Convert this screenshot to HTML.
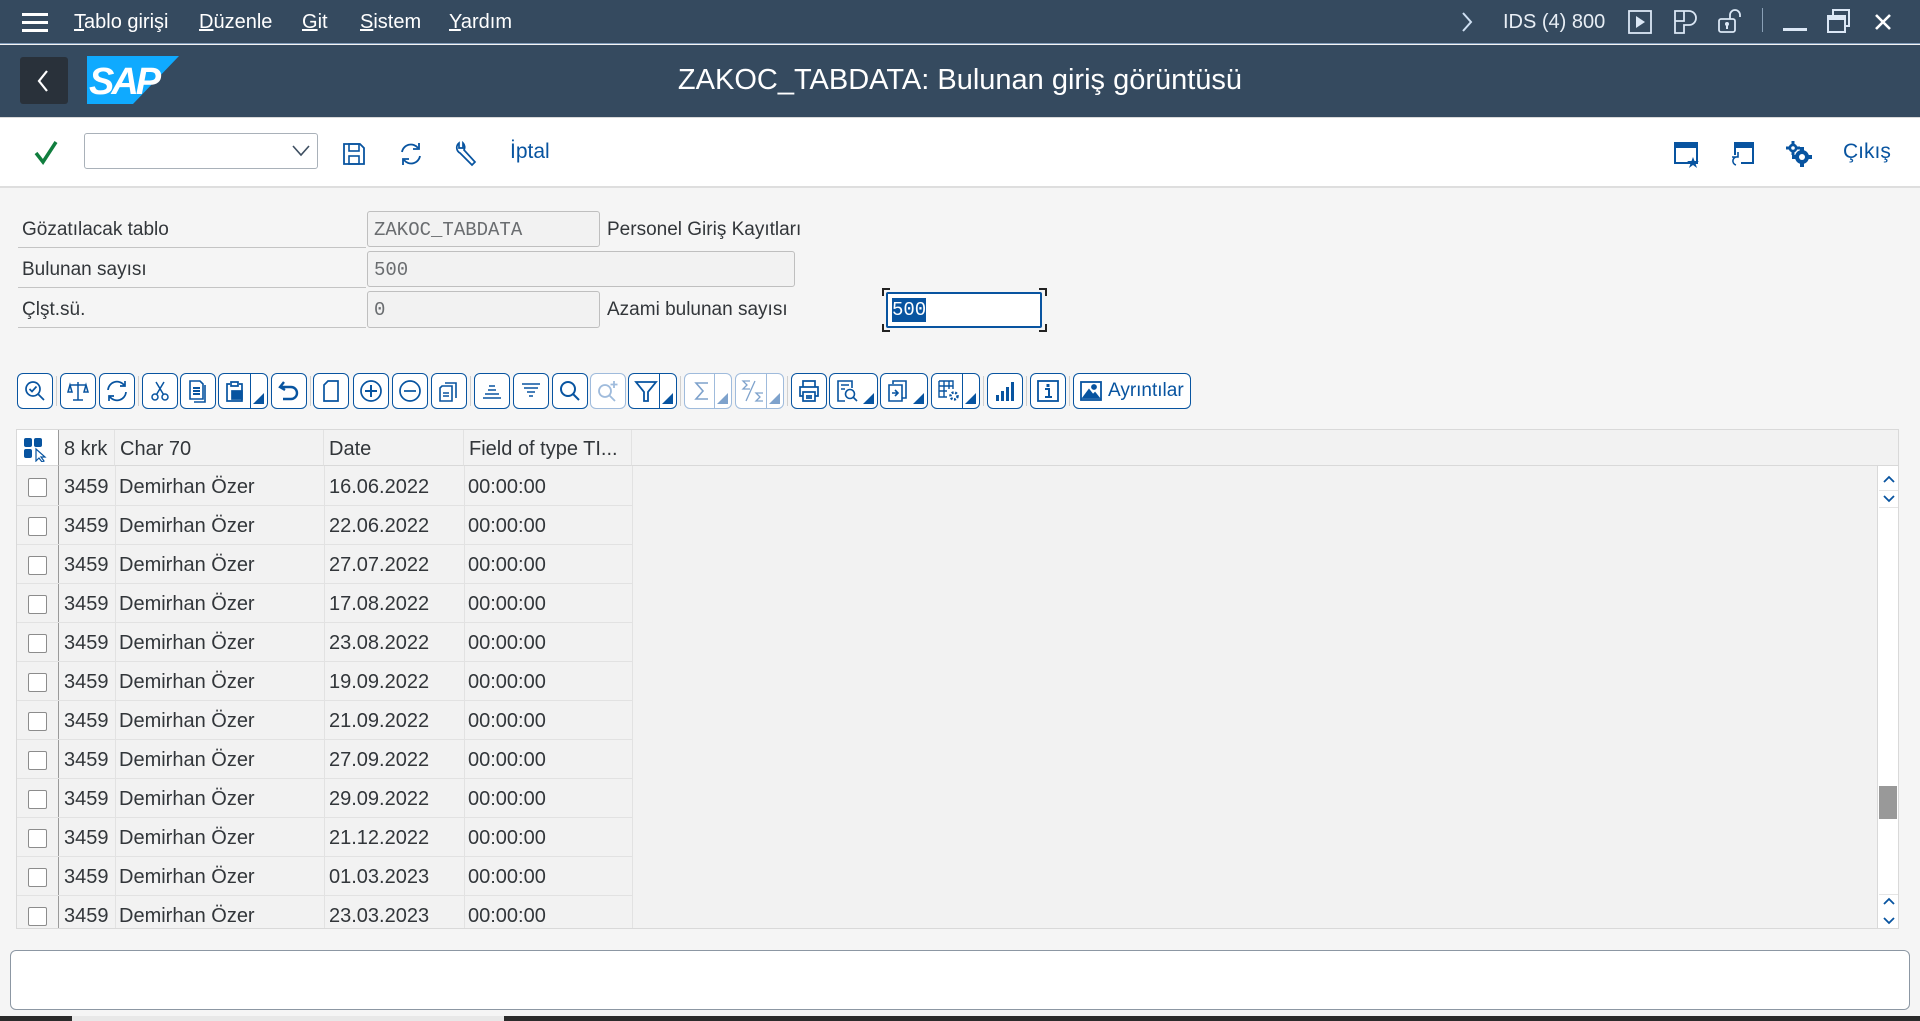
<!DOCTYPE html>
<html><head><meta charset="utf-8">
<style>
*{box-sizing:border-box;margin:0;padding:0}
body{width:1920px;height:1021px;overflow:hidden;background:#f5f5f5;font-family:"Liberation Sans","DejaVu Sans",sans-serif;position:relative;color:#32363a}
.a{position:absolute}
#menu{left:0;top:0;width:1920px;height:44px;background:#354a5f;border-bottom:1px solid #7f9ab8}
#menu .m{position:absolute;top:11px;color:#fff;font-size:20px}
#menu .m u{text-decoration:underline}
#title{left:0;top:45px;width:1920px;height:72px;background:#354a5f}
#tb{left:0;top:117px;width:1920px;height:71px;background:#fff;border-top:1px solid #d9d9d9;border-bottom:2px solid #dedede}
.lbl{font-size:19px;color:#32363a}
.row{position:absolute;left:18px;width:348px;border-bottom:1px solid #c4c4c4;height:40px}
.fld{position:absolute;background:#f2f2f2;border:1px solid #bfbfbf;border-radius:3px;font-family:"Liberation Mono",monospace;font-size:19px;color:#6a6d70;padding:7px 6px}
.b{position:absolute;top:373px;height:36px;width:36px;background:#fff;border:1.5px solid #0854a0;border-radius:6px}
.b.d{border-color:#9fbbdc}
.b svg{position:absolute;left:5px;top:5px}
.b .sp{position:absolute;top:0;bottom:0;border-left:1.5px solid #0854a0}
.b.d .sp{border-color:#9fbbdc}
.b .tri{position:absolute;right:3px;bottom:4px;width:0;height:0;border-left:11px solid transparent;border-bottom:11px solid #0854a0}
.b.d .tri{border-bottom-color:#7ea2cc}
.sep{position:absolute;top:376px;width:1px;height:30px;background:#d0d0d0}
#grid{left:16px;top:429px;width:1883px;height:500px;background:#f2f2f2;border:1px solid #d9d9d9;overflow:hidden}
.hd{position:absolute;top:0;height:36px;border-bottom:1px solid #d9d9d9;border-right:1px solid #e2e2e2;font-size:20px;padding:8px 5px;color:#32363a;white-space:nowrap}
.tr{position:absolute;left:0;width:615px;height:39px;border-bottom:1px solid #e2e2e2}
.tr span{position:absolute;top:9px;font-size:20px;color:#32363a;white-space:nowrap}
.cb{position:absolute;left:11px;top:11px;width:19px;height:19px;background:#fff;border:1px solid #8c8c8c;border-radius:2px}
.cn{position:absolute;width:8px;height:8px;border-color:#222;border-style:solid;border-width:0}
</style></head><body>

<div id="menu" class="a">
 <svg class="a" style="left:22px;top:12px" width="26" height="20"><rect y="1" width="26" height="3" fill="#fff"/><rect y="9" width="26" height="3" fill="#fff"/><rect y="17" width="26" height="3" fill="#fff"/></svg>
 <div class="m" style="left:74px"><u>T</u>ablo girişi</div>
 <div class="m" style="left:199px"><u>D</u>üzenle</div>
 <div class="m" style="left:302px"><u>G</u>it</div>
 <div class="m" style="left:360px"><u>S</u>istem</div>
 <div class="m" style="left:449px"><u>Y</u>ardım</div>
 <svg class="a" style="left:1460px;top:11px" width="14" height="22"><path d="M3 2 L11 11 L3 20" stroke="#cfe0f3" stroke-width="2" fill="none"/></svg>
 <div class="m" style="left:1503px;color:#e8eef5">IDS (4) 800</div>
 <svg class="a" style="left:1628px;top:10px" width="24" height="24"><rect x="1" y="1" width="22" height="22" fill="none" stroke="#dbe7f5" stroke-width="1.8"/><path d="M8 6 L17 12 L8 18Z" fill="#dbe7f5"/></svg>
 <svg class="a" style="left:1673px;top:9px" width="26" height="26"><path d="M2 2 H16 A7 7 0 0 1 16 16 H11 V24 H2Z M2 12 H11 V2" stroke="#dbe7f5" stroke-width="1.8" fill="none"/></svg>
 <svg class="a" style="left:1717px;top:8px" width="26" height="26"><rect x="2" y="11" width="16" height="13" rx="2" fill="none" stroke="#dbe7f5" stroke-width="1.8"/><path d="M13 11 V7 A5 5 0 0 1 23 7 V9" stroke="#dbe7f5" stroke-width="1.8" fill="none"/><circle cx="10" cy="16" r="2" fill="#dbe7f5"/><rect x="9" y="16" width="2" height="5" fill="#dbe7f5"/></svg>
 <div class="a" style="left:1762px;top:8px;width:1px;height:24px;background:#8aa0b6"></div>
 <div class="a" style="left:1783px;top:28px;width:24px;height:3px;background:#dbe7f5"></div>
 <svg class="a" style="left:1827px;top:8px" width="24" height="26"><rect x="1" y="8" width="17" height="16" fill="none" stroke="#dbe7f5" stroke-width="2"/><rect x="1" y="8" width="17" height="4" fill="#dbe7f5"/><path d="M6 7 V2 H22 V18 H19" stroke="#dbe7f5" stroke-width="2" fill="none"/></svg>
 <svg class="a" style="left:1874px;top:13px" width="18" height="18"><path d="M2 2 L16 16 M16 2 L2 16" stroke="#fff" stroke-width="2.6"/></svg>
</div>

<div id="title" class="a">
 <div class="a" style="left:20px;top:12px;width:48px;height:47px;background:#29313a;border-radius:3px"></div>
 <svg class="a" style="left:34px;top:23px" width="18" height="26"><path d="M13 3 L5 13 L13 23" stroke="#fff" stroke-width="2.2" fill="none"/></svg>
 <svg class="a" style="left:87px;top:11px" width="92" height="48"><path d="M0 0 H92 L46 48 H0Z" fill="#0faaff"/><text x="2" y="38" font-family="Liberation Sans Narrow, Liberation Sans" font-weight="bold" font-style="italic" font-size="38" fill="#fff" letter-spacing="-3">SAP</text></svg>
 <div class="a" style="left:0;width:1920px;text-align:center;top:19px;color:#fff;font-size:29px">ZAKOC_TABDATA: Bulunan giriş görüntüsü</div>
</div>

<div id="tb" class="a">
 <svg class="a" style="left:34px;top:22px" width="24" height="26"><path d="M2 13 L9 22 L22 2" stroke="#107e3e" stroke-width="3.5" fill="none"/></svg>
 <div class="a" style="left:84px;top:15px;width:234px;height:36px;background:#fff;border:1px solid #a9b1b9;border-radius:3px"></div>
 <svg class="a" style="left:292px;top:27px" width="18" height="12"><path d="M1 1 L9 10 L17 1" stroke="#3e4f61" stroke-width="1.6" fill="none"/></svg>
 <svg class="a" style="left:342px;top:24px" width="24" height="24"><path d="M2 2 H18 L22 6 V22 H2Z" fill="none" stroke="#0854a0" stroke-width="1.8"/><rect x="7" y="2" width="10" height="7" fill="none" stroke="#0854a0" stroke-width="1.6"/><rect x="7" y="14" width="10" height="8" fill="none" stroke="#0854a0" stroke-width="1.6"/></svg>
 <svg class="a" style="left:398px;top:23px" width="26" height="26"><path d="M4 11 A9 9 0 0 1 20 7 M22 15 A9 9 0 0 1 6 19" stroke="#0854a0" stroke-width="1.8" fill="none"/><path d="M21 2 V8 H15 M5 24 V18 H11" stroke="#0854a0" stroke-width="1.8" fill="none"/></svg>
 <svg class="a" style="left:454px;top:23px" width="24" height="26"><path d="M5 2 A6 6 0 0 0 6 12 L18 24 L21 21 L10 9 A6 6 0 0 0 9 2 L9 7 L5 7Z" stroke="#0854a0" stroke-width="1.7" fill="none"/></svg>
 <div class="a" style="left:510px;top:22px;font-size:21px;color:#0854a0">İptal</div>
 <svg class="a" style="left:1674px;top:24px" width="26" height="26"><rect x="1" y="1" width="22" height="20" fill="none" stroke="#0854a0" stroke-width="2"/><rect x="1" y="1" width="22" height="5" fill="#0854a0"/><path d="M19 15 L20.5 19 L25 19 L21.5 21.5 L23 26 L19 23 L15 26 L16.5 21.5 L13 19 L17.5 19Z" fill="#0854a0"/></svg>
 <svg class="a" style="left:1730px;top:24px" width="26" height="26"><path d="M5 13 V1 H23 V21 H11" fill="none" stroke="#0854a0" stroke-width="2"/><rect x="5" y="1" width="18" height="5" fill="#0854a0"/><path d="M8 15 A4 4 0 1 0 6 23 M2 15 H8 V10" stroke="#0854a0" stroke-width="1.6" fill="none"/></svg>
 <svg class="a" style="left:1786px;top:23px" width="26" height="26"><g fill="#0854a0"><circle cx="7" cy="7" r="4.5"/><rect x="5.5" y="0" width="3" height="14"/><rect x="0" y="5.5" width="14" height="3"/><circle cx="16" cy="16" r="7"/><rect x="14" y="6" width="4" height="20"/><rect x="6" y="14" width="20" height="4"/></g><circle cx="7" cy="7" r="1.8" fill="#fff"/><circle cx="16" cy="16" r="3" fill="#fff"/></svg>
 <div class="a" style="left:1843px;top:22px;font-size:21px;color:#0854a0">Çıkış</div>
</div>

<!-- form -->
<div class="row" style="top:208px"><div class="lbl a" style="left:4px;top:11px">Gözatılacak tablo</div></div>
<div class="row" style="top:248px"><div class="lbl a" style="left:4px;top:11px">Bulunan sayısı</div></div>
<div class="row" style="top:288px"><div class="lbl a" style="left:4px;top:11px">Çlşt.sü.</div></div>
<div class="fld" style="left:367px;top:211px;width:233px;height:36px">ZAKOC_TABDATA</div>
<div class="fld" style="left:367px;top:251px;width:428px;height:36px">500</div>
<div class="fld" style="left:367px;top:291px;width:233px;height:37px">0</div>
<div class="lbl a" style="left:607px;top:219px">Personel Giriş Kayıtları</div>
<div class="lbl a" style="left:607px;top:299px">Azami bulunan sayısı</div>
<div class="cn" style="left:882px;top:288px;border-left-width:2px;border-top-width:2px"></div>
<div class="cn" style="left:1039px;top:288px;border-right-width:2px;border-top-width:2px"></div>
<div class="cn" style="left:882px;top:324px;border-left-width:2px;border-bottom-width:2px"></div>
<div class="cn" style="left:1039px;top:324px;border-right-width:2px;border-bottom-width:2px"></div>
<div class="a" style="left:886px;top:292px;width:156px;height:36px;background:#fff;border:2px solid #0854a0;border-radius:2px"></div>
<div class="a" style="left:892px;top:298px;background:#0854a0;color:#fff;font-family:'Liberation Mono',monospace;font-size:19px;padding:1px 0">500</div>

<!-- ALV toolbar -->
<div class="b" style="left:17px"><svg width="24" height="24" fill="none" stroke="#0854a0" stroke-width="1.7"><circle cx="10" cy="10" r="7"/><path d="M15 15 L21 21 M6.5 10 L9 12.5 L13.5 7.5"/></svg></div>
<div class="sep" style="left:56px"></div>
<div class="b" style="left:60px"><svg width="24" height="24" fill="none" stroke="#0854a0" stroke-width="1.5"><path d="M12 3 V21 M7 21 H17 M4 6 H20 M2 13 L4 6 L6 13Z M18 13 L20 6 L22 13Z"/></svg></div>
<div class="b" style="left:99px"><svg width="24" height="24" fill="none" stroke="#0854a0" stroke-width="1.7"><path d="M3 11 A9 9 0 0 1 19 6 M21 13 A9 9 0 0 1 5 18 M20 2 V7 H15 M4 22 V17 H9"/></svg></div>
<div class="sep" style="left:138px"></div>
<div class="b" style="left:142px"><svg width="24" height="24" fill="none" stroke="#0854a0" stroke-width="1.5"><circle cx="7" cy="18" r="3"/><circle cx="17" cy="18" r="3"/><path d="M8.5 15.5 L16 3 M15.5 15.5 L8 3"/></svg></div>
<div class="b" style="left:180px"><svg width="24" height="24" fill="none" stroke="#0854a0" stroke-width="1.6"><path d="M4 2 H14 L17 5 V20 H4Z M19 6 V23 H8"/><path d="M7 9 H14 M7 12 H14 M7 15 H14" stroke-width="2"/></svg></div>
<div class="b" style="left:218px;width:50px"><svg width="24" height="24" fill="none" stroke="#0854a0" stroke-width="1.7"><path d="M6 5 H3 V22 H18 V5 H15 M7 3 H14 V7 H7Z"/><rect x="8" y="12" width="10" height="8" fill="#0854a0"/></svg><div class="sp" style="left:31px"></div><div class="tri"></div></div>
<div class="b" style="left:271px"><svg width="24" height="24" fill="none" stroke="#0854a0" stroke-width="2.4"><path d="M7 3 L3 8 L8 11 M4 8 H14 A6 6 0 0 1 14 20 H6"/></svg></div>
<div class="sep" style="left:310px"></div>
<div class="b" style="left:313px"><svg width="24" height="24" fill="none" stroke="#0854a0" stroke-width="1.7"><path d="M9 2 H19 V22 H5 V6Z"/></svg></div>
<div class="b" style="left:353px"><svg width="24" height="24" fill="none" stroke="#0854a0" stroke-width="1.7"><circle cx="12" cy="12" r="10"/><path d="M12 6 V18 M6 12 H18" stroke-width="2"/></svg></div>
<div class="b" style="left:392px"><svg width="24" height="24" fill="none" stroke="#0854a0" stroke-width="1.7"><circle cx="12" cy="12" r="10"/><path d="M6 12 H18"/></svg></div>
<div class="b" style="left:431px"><svg width="24" height="24" fill="none" stroke="#0854a0" stroke-width="1.6"><path d="M5 7 H15 V22 H3 V9Z M8 4 H19 V19"/><path d="M6 14 H12 M6 17 H12"/></svg></div>
<div class="sep" style="left:470px"></div>
<div class="b" style="left:474px"><svg width="24" height="24" stroke="#0854a0" stroke-width="1.4"><path d="M9 7 H15 M8 11 H16 M5 15 H19 M3 19 H21"/></svg></div>
<div class="b" style="left:513px"><svg width="24" height="24" stroke="#0854a0" stroke-width="1.4"><path d="M3 5 H21 M5 9 H19 M8 13 H16 M10 17 H14"/></svg></div>
<div class="b" style="left:552px"><svg width="24" height="24" fill="none" stroke="#0854a0" stroke-width="2"><circle cx="10" cy="10" r="7"/><path d="M15 15 L21 21"/></svg></div>
<div class="b d" style="left:590px"><svg width="24" height="24" fill="none" stroke="#9fbbdc" stroke-width="1.8"><circle cx="9" cy="12" r="6"/><path d="M13 16 L19 22 M18 2 V9 M14.5 5.5 H21.5"/></svg></div>
<div class="b" style="left:628px;width:49px"><svg width="24" height="24" fill="none" stroke="#0854a0" stroke-width="1.8"><path d="M2 3 H22 L14 13 V22 H10 V13Z"/></svg><div class="sp" style="left:30px"></div><div class="tri"></div></div>
<div class="sep" style="left:680px"></div>
<div class="b d" style="left:684px;width:48px"><svg width="24" height="24" fill="none" stroke="#7ea2cc" stroke-width="1.6"><path d="M18 4 H6 L13 12 L6 20 H18"/></svg><div class="sp" style="left:29px"></div><div class="tri"></div></div>
<div class="b d" style="left:735px;width:49px"><svg width="24" height="24" fill="none" stroke="#7ea2cc" stroke-width="1.3"><path d="M9 2 H2 L6 6 L2 10 H9 M5 22 L14 2 M22 14 H15 L19 18 L15 22 H22"/></svg><div class="sp" style="left:30px"></div><div class="tri"></div></div>
<div class="sep" style="left:787px"></div>
<div class="b" style="left:791px"><svg width="24" height="24" fill="none" stroke="#0854a0" stroke-width="1.7"><path d="M6 8 V2 H18 V8 M6 17 H3 V8 H21 V17 H18 M6 13 H18 V22 H6Z M9 17 H15 M9 19 H15"/></svg></div>
<div class="b" style="left:829px;width:49px"><svg width="24" height="24" fill="none" stroke="#0854a0" stroke-width="1.6"><path d="M10 22 H3 V2 H17 V9 M6 6 H14 M6 10 H10"/><circle cx="15" cy="15" r="4.5"/><path d="M18 18 L22 22"/></svg><div class="tri"></div></div>
<div class="b" style="left:880px;width:48px"><svg width="24" height="24" fill="none" stroke="#0854a0" stroke-width="1.6"><path d="M7 5 V2 H20 V19 H16 M3 6 H16 V22 H3Z M6 14 H12 M9 11 L12 14 L9 17"/></svg><div class="tri"></div></div>
<div class="b" style="left:931px;width:49px"><svg width="24" height="24" fill="none" stroke="#0854a0" stroke-width="1.4"><path d="M2 2 H16 V10 M2 2 V18 H10 M2 7 H16 M2 12 H10 M7 2 V18 M12 2 V10"/><circle cx="17" cy="17" r="3.5" stroke-width="2.5" stroke-dasharray="2 1.5"/></svg><div class="sp" style="left:30px"></div><div class="tri"></div></div>
<div class="sep" style="left:983px"></div>
<div class="b" style="left:987px"><svg width="24" height="24" fill="#0854a0"><rect x="3" y="16" width="3" height="6"/><rect x="8" y="12" width="3" height="10"/><rect x="13" y="8" width="3" height="14"/><rect x="18" y="3" width="3" height="19"/></svg></div>
<div class="sep" style="left:1026px"></div>
<div class="b" style="left:1030px"><svg width="24" height="24" fill="none" stroke="#0854a0" stroke-width="1.8"><rect x="2" y="2" width="20" height="20"/><rect x="10.5" y="5" width="3" height="3" fill="#0854a0" stroke="none"/><path d="M9 10 H13 V18 M9 18 H16" stroke-width="2"/></svg></div>
<div class="sep" style="left:1069px"></div>
<div class="b" style="left:1073px;width:118px"><svg width="24" height="24" fill="none" stroke="#0854a0" stroke-width="1.8"><rect x="2" y="3" width="20" height="18"/><path d="M4 19 L10 11 L14 16 L16 14 L20 19Z" fill="#0854a0"/><circle cx="15" cy="8" r="2" fill="#0854a0"/></svg><div class="a" style="left:34px;top:6px;font-size:19px;color:#0854a0">Ayrıntılar</div></div>

<!-- grid -->
<div id="grid" class="a">
 <div class="hd" style="left:0;width:42px;background:#fff;border-right:1px solid #9a9a9a;border-bottom:1px solid #d9d9d9"><svg class="a" style="left:7px;top:8px" width="26" height="24"><rect x="0" y="0" width="8" height="9" rx="2" fill="#0854a0"/><rect x="10" y="0" width="8" height="9" rx="2" fill="#0854a0"/><rect x="0" y="11" width="8" height="9" rx="2" fill="#0854a0"/><path d="M12 11 L12 23 L15 20 L18 24 L20 23 L17 19 L21 19Z" fill="#fff" stroke="#0854a0" stroke-width="1.2"/></svg></div>
 <div class="hd" style="left:42px;width:56px">8 krk</div>
 <div class="hd" style="left:98px;width:209px">Char 70</div>
 <div class="hd" style="left:307px;width:140px">Date</div>
 <div class="hd" style="left:447px;width:168px">Field of type TI...</div>
 <div class="a" style="left:615px;top:0;width:1266px;height:36px;border-bottom:1px solid #d9d9d9"></div>
 <div class="a" style="left:41px;top:36px;width:1px;height:464px;background:#9a9a9a"></div>
 <div class="a" style="left:98px;top:36px;width:1px;height:464px;background:#e2e2e2"></div>
 <div class="a" style="left:307px;top:36px;width:1px;height:464px;background:#e2e2e2"></div>
 <div class="a" style="left:447px;top:36px;width:1px;height:464px;background:#e2e2e2"></div>
 <div class="a" style="left:615px;top:36px;width:1px;height:464px;background:#e2e2e2"></div>
 <div id="rows"></div>
 <div class="a" style="left:1860px;top:36px;width:22px;height:463px;background:#fff;border-left:1px solid #d9d9d9"></div>
 <svg class="a" style="left:1865px;top:43px" width="14" height="34"><path d="M2 9 L7 4 L12 9 M2 23 L7 28 L12 23" stroke="#0854a0" stroke-width="1.8" fill="none"/></svg>
 <div class="a" style="left:1862px;top:60px;width:19px;height:1px;background:#e5e5e5"></div>
 <div class="a" style="left:1862px;top:77px;width:19px;height:1px;background:#e5e5e5"></div>
 <div class="a" style="left:1862px;top:356px;width:18px;height:33px;background:#999"></div>
 <div class="a" style="left:1862px;top:464px;width:19px;height:1px;background:#e5e5e5"></div>
 <svg class="a" style="left:1865px;top:465px" width="14" height="34"><path d="M2 9 L7 4 L12 9 M2 23 L7 28 L12 23" stroke="#0854a0" stroke-width="1.8" fill="none"/></svg>
</div>

<div class="a" style="left:10px;top:950px;width:1900px;height:60px;background:#fff;border:1px solid #8c97a3;border-radius:6px"></div>
<div class="a" style="left:0;top:1016px;width:1920px;height:5px;background:#2b2b2b"></div>
<div class="a" style="left:72px;top:1016px;width:432px;height:5px;background:#e8e8e8"></div>

<script>
var d=["16.06.2022","22.06.2022","27.07.2022","17.08.2022","23.08.2022","19.09.2022","21.09.2022","27.09.2022","29.09.2022","21.12.2022","01.03.2023","23.03.2023"];
var h="";for(var i=0;i<d.length;i++){var t=37+i*39;h+='<div class="tr" style="top:'+t+'px"><div class="cb"></div><span style="left:47px">3459</span><span style="left:102px">Demirhan Özer</span><span style="left:312px">'+d[i]+'</span><span style="left:451px">00:00:00</span></div>';}
document.getElementById("rows").innerHTML=h;
</script>
</body></html>
